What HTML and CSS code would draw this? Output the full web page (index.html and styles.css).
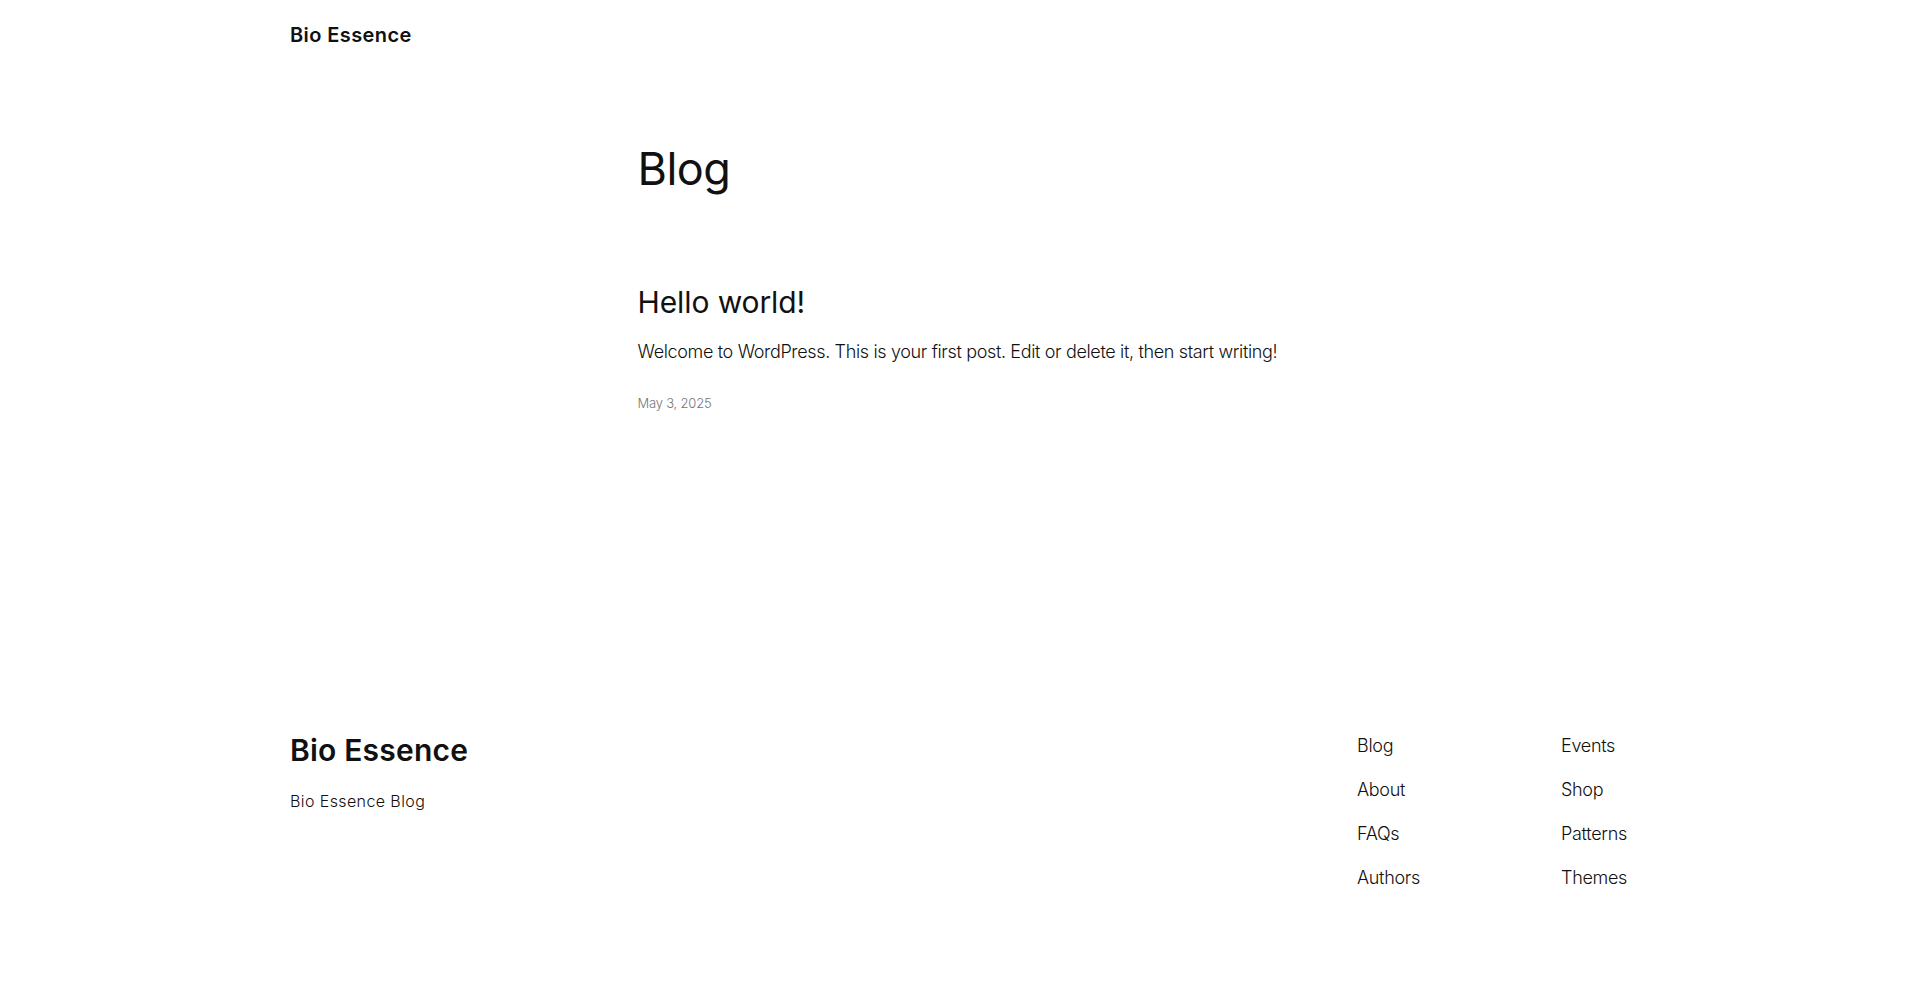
FILE: index.html
```html
<!DOCTYPE html>
<html lang="en">
<head>
<meta charset="utf-8">
<title>Blog – Bio Essence</title>
<link rel="stylesheet" href="styles.css">
</head>
<body>
<header class="site-header">
  <div class="wide">
    <a class="site-title" href="#">Bio Essence</a>
  </div>
</header>
<main class="site-main">
  <div class="content">
    <h1 class="page-title">Blog</h1>
    <article class="post">
      <h2 class="post-title"><a href="#">Hello world!</a></h2>
      <p class="post-excerpt">Welcome to WordPress. This is your first post. Edit or delete it, then start writing!</p>
      <div class="post-date">May 3, 2025</div>
    </article>
  </div>
</main>
<footer class="site-footer">
  <div class="wide footer-row">
    <div class="footer-brand">
      <a class="footer-title" href="#">Bio Essence</a>
      <p class="footer-tagline">Bio Essence Blog</p>
    </div>
    <nav class="footer-nav">
      <ul class="nav-col">
        <li><a href="#">Blog</a></li>
        <li><a href="#">About</a></li>
        <li><a href="#">FAQs</a></li>
        <li><a href="#">Authors</a></li>
      </ul>
      <ul class="nav-col">
        <li><a href="#">Events</a></li>
        <li><a href="#">Shop</a></li>
        <li><a href="#">Patterns</a></li>
        <li><a href="#">Themes</a></li>
      </ul>
    </nav>
  </div>
</footer>
</body>
</html>
```
FILE: styles.css
```css
* { box-sizing: border-box; }
html, body { margin: 0; padding: 0; background: #fff; }
body {
  font-family: Inter, "Liberation Sans", sans-serif;
  color: #111;
  font-weight: 300;
}
a { color: inherit; text-decoration: none; }

.wide {
  width: 1340px;
  margin: 0 auto;
}

.site-header { padding-top: 21px; }
.site-title {
  display: block;
  font-size: 20px;
  line-height: 28px;
  font-weight: 600;
  letter-spacing: 0.4px;
}

.site-main { padding-top: 93px; }
.content {
  width: 645px;
  margin: 0 auto;
}
.page-title {
  margin: 0;
  font-size: 45px;
  line-height: 54px;
  font-weight: 400;
  letter-spacing: -0.5px;
}
.post { margin-top: 88px; }
.post-title {
  margin: 0;
  font-size: 30px;
  line-height: 36px;
  font-weight: 400;
  letter-spacing: -0.1px;
}
.post-excerpt {
  margin: 18px 0 0;
  font-size: 18px;
  line-height: 27px;
  letter-spacing: -0.35px;
  white-space: nowrap;
}
.post-date {
  margin-top: 29px;
  font-size: 13px;
  line-height: 18px;
  color: #767676;
  letter-spacing: -0.2px;
}

.site-footer {
  margin-top: 320px;
  padding-bottom: 100px;
}
.footer-row {
  display: flex;
  justify-content: space-between;
  align-items: flex-start;
}
.footer-title {
  display: block;
  font-size: 30px;
  line-height: 36px;
  font-weight: 600;
  letter-spacing: 0.2px;
}
.footer-tagline {
  margin: 21px 0 0;
  font-size: 16px;
  line-height: 24px;
  letter-spacing: 0.4px;
}
.footer-nav {
  width: 273px;
  display: grid;
  grid-template-columns: 204px 1fr;
}
.nav-col {
  list-style: none;
  margin: 0;
  padding: 0;
  display: flex;
  flex-direction: column;
  gap: 17px;
}
.nav-col li {
  font-size: 18px;
  line-height: 27px;
  letter-spacing: -0.3px;
}
```
